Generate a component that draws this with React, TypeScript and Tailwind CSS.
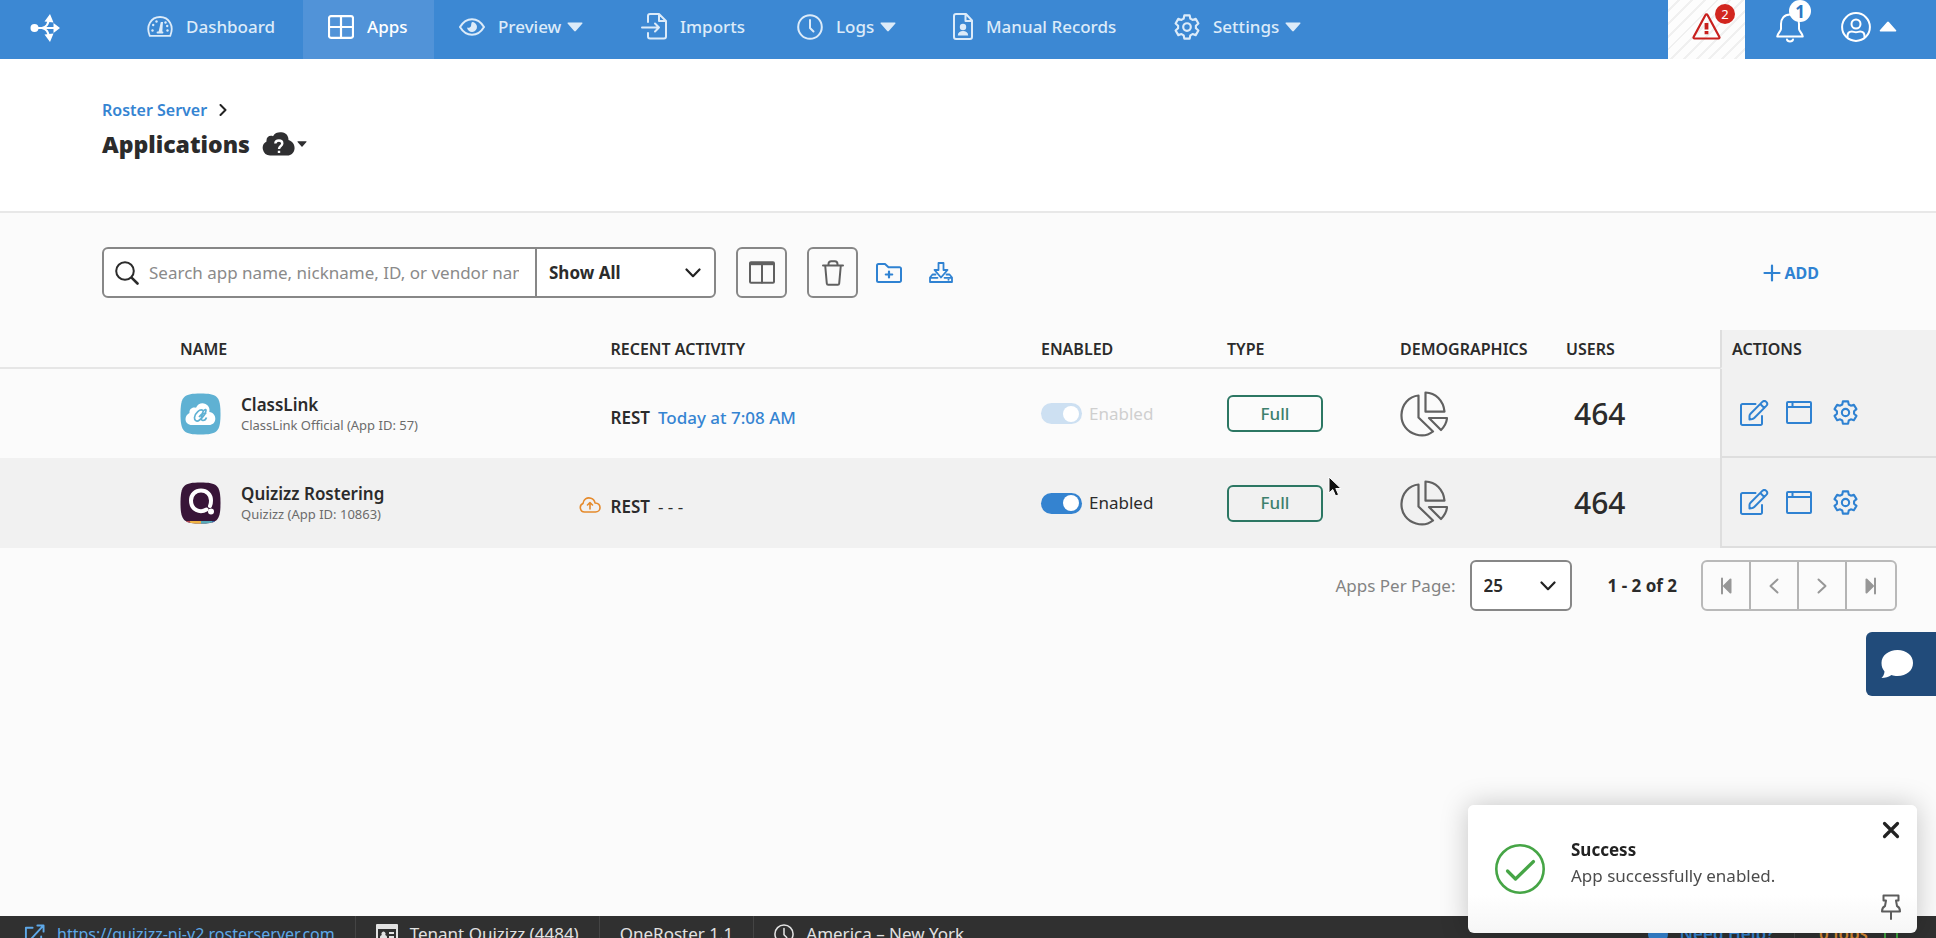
import React, { useState } from "react";

type IconProps = { className?: string };

const stroke = {
  fill: "none",
  stroke: "currentColor",
  strokeWidth: 2,
  strokeLinecap: "round" as const,
  strokeLinejoin: "round" as const,
};

const LogoIcon = ({ className }: IconProps) => (
  <svg viewBox="0 0 30 28" className={className} aria-hidden="true">
    <g fill="none" stroke="currentColor" strokeWidth="2.2">
      <path d="M4 14H25M12 14C17 13 18 10 19 5M12 14C17 15 18 18 19 23" />
    </g>
    <circle cx="4.5" cy="14" r="4" fill="currentColor" />
    <path d="M23.500 9 30 14l-6.500 5zM14.500 7.500 20 0l3.500 8.500zM14.500 20.500l5.500 7.500 3.500-8.500z" fill="currentColor" />
  </svg>
);

const GaugeIcon = ({ className }: IconProps) => (
  <svg viewBox="0 0 26 21" className={className} aria-hidden="true">
    <path {...stroke} strokeWidth="1.8" d="M2.800 19.800C-1.500 10 4 1 13 1s14.500 9 10.200 18.800z" />
    <path {...stroke} strokeWidth="1.8" d="M10.500 16.500h5" />
    <g fill="currentColor">
      <circle cx="9.5" cy="5.500" r="1.200" />
      <circle cx="6.200" cy="9" r="1.200" />
      <circle cx="5.500" cy="14.500" r="1.200" />
      <circle cx="18.500" cy="6.500" r="1.200" />
      <circle cx="20.200" cy="10" r="1.200" />
      <circle cx="20.500" cy="14.500" r="1.200" />
      <path d="M11.300 17l2.500-11h2.200l-.8 11z" />
    </g>
  </svg>
);

const GridIcon = ({ className }: IconProps) => (
  <svg viewBox="0 0 26 24" className={className} aria-hidden="true">
    <path {...stroke} strokeWidth="2.2" d="M3 1.200h20a2 2 0 0 1 2 2v17.600a2 2 0 0 1-2 2H3a2 2 0 0 1-2-2V3.200a2 2 0 0 1 2-2zM13 1.200v21.600M1 12h24" />
  </svg>
);

const EyeIcon = ({ className }: IconProps) => (
  <svg viewBox="0 0 26 18" className={className} aria-hidden="true">
    <path {...stroke} d="M1 9C4 4 8 1.200 13 1.200S22 4 25 9c-3 5-7 7.800-12 7.800S4 14 1 9z" />
    <path fill="currentColor" d="M13 4a5 5 0 1 1-5 5.500c1.500.8 3.500.2 4-1.500.4-1.400 0-2.800 1-4z" />
  </svg>
);

const ImportIcon = ({ className }: IconProps) => (
  <svg viewBox="0 0 26 27" className={className} aria-hidden="true">
    <path {...stroke} d="M7 9V3a2 2 0 0 1 2-2h9l7 7v15.500a2 2 0 0 1-2 2H9a2 2 0 0 1-2-2V20M18 1v7h7M1 14.500h17M14 10.500l4 4-4 4" />
  </svg>
);

const ClockIcon = ({ className }: IconProps) => (
  <svg viewBox="0 0 26 26" className={className} aria-hidden="true">
    <circle {...stroke} cx="13" cy="13" r="11.800" />
    <path {...stroke} d="M13 6v8l3.500 3.500" />
  </svg>
);

const RecordIcon = ({ className }: IconProps) => (
  <svg viewBox="0 0 20 27" className={className} aria-hidden="true">
    <path {...stroke} d="M3 1h10l6 6.500v16.500a2 2 0 0 1-2 2H3a2 2 0 0 1-2-2V3a2 2 0 0 1 2-2zM12.500 1v7H19" />
    <circle cx="10" cy="14" r="3.200" fill="currentColor" />
    <path d="M4.800 22.500c0-3 2.200-4.500 5.200-4.500s5.200 1.500 5.200 4.500z" fill="currentColor" />
  </svg>
);

// Outline of a cog with six teeth, centred in a 24-unit box.
const gearPath =
  [0, 60, 120, 180, 240, 300]
    .flatMap((tooth) =>
      [
        [-22, 8.3],
        [-13, 11],
        [13, 11],
        [22, 8.3],
      ].map(([offset, radius]) => {
        const angle = ((tooth + offset) * Math.PI) / 180;
        return `${(12 + radius * Math.sin(angle)).toFixed(2)} ${(12 - radius * Math.cos(angle)).toFixed(2)}`;
      }),
    )
    .map((point, i) => (i ? "L" : "M") + point)
    .join("") + "Z";

const GearIcon = ({ className }: IconProps) => (
  <svg viewBox="0 0 24 24" className={className} aria-hidden="true">
    <path {...stroke} d={gearPath} />
    <circle {...stroke} cx="12" cy="12" r="3.500" />
  </svg>
);

const CaretIcon = ({ className }: IconProps) => (
  <svg viewBox="0 0 16 10" className={className} aria-hidden="true">
    <path d="M1 .5h14q1 .3.400 1.100L8.800 9q-.8.900-1.600 0L.600 1.600Q0 .8 1 .5z" fill="currentColor" />
  </svg>
);

const ChevronDown = ({ className }: IconProps) => (
  <svg viewBox="0 0 16 10" className={className} aria-hidden="true">
    <path {...stroke} strokeWidth="2.2" d="M1.500 1.500 8 8.200l6.500-6.700" />
  </svg>
);

const navItems = [
  { label: "Dashboard", icon: GaugeIcon, size: "w-[26px] h-[21px]", box: "w-[181px]", caret: false },
  { label: "Apps", icon: GridIcon, size: "w-[26px] h-6", box: "w-[131px]", caret: false, active: true },
  { label: "Preview", icon: EyeIcon, size: "w-[26px] h-[18px]", box: "w-[182px]", caret: true },
  { label: "Imports", icon: ImportIcon, size: "w-[26px] h-[27px]", box: "w-[156px]", caret: false },
  { label: "Logs", icon: ClockIcon, size: "w-[26px] h-[26px]", box: "w-[156px]", caret: true },
  { label: "Manual Records", icon: RecordIcon, size: "w-5 h-[27px]", box: "w-[221px]", caret: false },
  { label: "Settings", icon: GearIcon, size: "w-[26px] h-[26px]", box: "w-[180px]", caret: true },
];

function TopNav() {
  return (
    <header className="flex h-[59px] shrink-0 items-stretch bg-[#3c88d3] text-white">
      <a href="#home" aria-label="Home" className="flex w-[122px] items-center pb-1 pl-[30px]">
        <LogoIcon className="h-7 w-[30px]" />
      </a>
      <nav className="flex">
        {navItems.map(({ label, icon: Icon, size, box, caret, active }) => (
          <a
            key={label}
            href={"#" + label}
            className={
              "flex items-center whitespace-nowrap pb-1.5 pl-[25px] text-[17px] font-medium leading-6 " +
              box +
              (active ? " bg-[#5193d8] text-white" : " text-[#dcebf9]")
            }
          >
            <Icon className={"mr-[13px] shrink-0 " + size} />
            {label}
            {caret && <CaretIcon className="ml-1.5 h-2.5 w-4" />}
          </a>
        ))}
      </nav>
      <div className="ml-auto flex">
        <button
          aria-label="Alerts"
          className="relative flex w-[77px] items-center justify-center bg-[repeating-linear-gradient(135deg,#fdfdfd_0,#fdfdfd_7px,#f0f0f0_7px,#f0f0f0_9px)] pb-1.5 text-[#c8201e]"
        >
          <svg viewBox="0 0 29 27" className="h-[27px] w-[29px]" aria-hidden="true">
            <path {...stroke} strokeWidth="2.2" d="M13.600 1.800a1 1 0 0 1 1.800 0l12 22.200a1 1 0 0 1-.9 1.500h-24a1 1 0 0 1-.9-1.500z" />
            <path d="M12.600 10h3.800v6.500h-3.800zM12.600 18h3.800v3.200h-3.800z" fill="currentColor" />
          </svg>
          <span className="absolute left-[47px] top-1 flex size-5 items-center justify-center rounded-full bg-[#d2261f] text-[13px] leading-none text-white">
            2
          </span>
        </button>
        <button aria-label="Notifications" className="relative flex w-[90px] items-center justify-center pb-1">
          <svg viewBox="0 0 28 30" className="h-[30px] w-7" aria-hidden="true">
            <path {...stroke} d="M14 1.500C8 1.500 5 6 5 11v5c0 2-3.500 4.500-3.800 7.500h25.600C26.500 20.500 23 18 23 16v-5c0-5-3-9.500-9-9.500zM11 26.500c.5 2.500 5.500 2.500 6 0" />
          </svg>
          <span className="absolute left-11 top-0 flex size-[22px] items-center justify-center rounded-full bg-white text-[17px] font-bold leading-none text-[#2c77c3]">
            1
          </span>
        </button>
        <button aria-label="Account" className="flex w-[101px] items-center gap-2 pb-1.5 pl-1.5">
          <svg viewBox="0 0 30 30" className="size-[30px]" aria-hidden="true">
            <g {...stroke}>
              <circle cx="15" cy="15" r="13.900" />
              <circle cx="15" cy="12" r="4.500" />
              <path d="M6.500 25c-.3-4 1.500-5.500 4.300-5.500 1.500 0 2.500.8 4.200.8s2.700-.8 4.200-.8c2.800 0 4.600 1.500 4.300 5.500" />
            </g>
          </svg>
          <CaretIcon className="h-[11px] w-[18px] rotate-180" />
        </button>
      </div>
    </header>
  );
}

function PageHeader() {
  return (
    <section className="h-[154px] shrink-0 border-b-2 border-[#e8e8e8] bg-white pl-[102px] pt-[39px]">
      <div className="flex items-center gap-3 leading-6">
        <a href="#roster" className="text-[16px] font-semibold text-[#3584d2]">
          Roster Server
        </a>
        <svg viewBox="0 0 8 12" className="h-3 w-2 text-[#222]" aria-hidden="true">
          <path {...stroke} d="M1.500 1 6.500 6l-5 5" />
        </svg>
      </div>
      <div className="mt-1.5 flex items-center leading-8">
        <h1 className="font-['Open_Sans','Noto_Sans',sans-serif] text-[23px] font-extrabold text-[#2b2b2b]">Applications</h1>
        <button aria-label="Help" className="ml-3 flex items-center gap-0.5 text-[#2f2f31]">
          <svg viewBox="0 0 33 24" className="h-6 w-[33px]" aria-hidden="true">
            <path d="M8 23.500a7.500 7.500 0 0 1-3.500-14C4 5 7.500 3 11 4.200 13 .8 16 0 19.500.300 24 .8 26.500 3.500 26.500 8c4 1.500 6.500 4.500 6 9-.5 4-3.500 6.500-7 6.500z" fill="currentColor" />
            <path fill="none" stroke="#fff" strokeWidth="2.4" d="M13.300 11.500c.3-4 7-4 7 0 0 2.500-3.300 2.500-3.300 5.500M17 18.700v2.300" />
          </svg>
          <CaretIcon className="h-1.5 w-2.5" />
        </button>
      </div>
    </section>
  );
}

function Toolbar() {
  return (
    <div className="flex items-center pb-8 pl-[102px] pr-[117px] pt-[34px]">
      <div className="flex h-[51px] w-[614px] rounded-md border-2 border-[#878787] bg-white">
        <label className="flex min-w-0 flex-1 items-center border-r-2 border-[#878787] pl-[11px] pr-4">
          <svg viewBox="0 0 24 24" className="mr-2.5 size-6 shrink-0 text-[#2b2b2b]" aria-hidden="true">
            <circle {...stroke} cx="10" cy="10" r="8.800" />
            <path {...stroke} strokeWidth="2.6" d="m16.800 16.800 5.700 5.700" />
          </svg>
          <span className="sr-only">Search</span>
          <input
            type="text"
            placeholder="Search app name, nickname, ID, or vendor name"
            className="w-full min-w-0 bg-transparent text-[17px] text-[#2b2b2b] outline-none placeholder:text-[#8a8a8a]"
          />
        </label>
        <label className="relative flex w-[177px] items-center">
          <span className="sr-only">Filter</span>
          <select className="h-full w-full appearance-none bg-transparent pl-3 text-[17px] font-bold text-[#2b2b2b] outline-none">
            <option>Show All</option>
          </select>
          <ChevronDown className="pointer-events-none absolute right-[13px] h-2.5 w-4 text-[#222]" />
        </label>
      </div>
      <button aria-label="Columns" className="ml-5 flex h-[51px] w-[51px] items-center justify-center rounded-md border-2 border-[#878787] text-[#606060]">
        <svg viewBox="0 0 26 23" className="h-[23px] w-[26px]" aria-hidden="true">
          <path {...stroke} d="M2 1.200h22a1 1 0 0 1 1 1v18.600a1 1 0 0 1-1 1H2a1 1 0 0 1-1-1V2.200a1 1 0 0 1 1-1zM13 2v20" />
          <path d="M1 1h24v3.200H1z" fill="currentColor" />
        </svg>
      </button>
      <button aria-label="Delete" className="ml-5 flex h-[51px] w-[51px] items-center justify-center rounded-md border-2 border-[#878787] text-[#606060]">
        <svg viewBox="0 0 22 26" className="h-[26px] w-[22px]" aria-hidden="true">
          <path {...stroke} d="M1 5.500h20M6.500 5V4c0-1.700 1-2.800 2.700-2.800h3.600c1.700 0 2.700 1.100 2.700 2.800v1M3.200 5.500l1.600 18c.1.900.6 1.300 1.400 1.300h9.600c.8 0 1.300-.4 1.400-1.300l1.600-18" />
        </svg>
      </button>
      <button aria-label="New folder" className="ml-[18px] text-[#2f82d2]">
        <svg viewBox="0 0 26 20" className="h-5 w-[26px]" aria-hidden="true">
          <path {...stroke} d="M2.500 1H9l3.500 3.200h11A1.500 1.500 0 0 1 25 5.700v11.800a1.500 1.500 0 0 1-1.500 1.500h-21A1.500 1.500 0 0 1 1 17.500v-15A1.500 1.500 0 0 1 2.500 1z" />
          <path {...stroke} strokeWidth="2.2" d="M13 8.500v6M9.800 11.500h6.400" />
        </svg>
      </button>
      <button aria-label="Download" className="ml-[27px] text-[#2f82d2]">
        <svg viewBox="0 0 24 21" className="h-[21px] w-6" aria-hidden="true">
          <path {...stroke} strokeWidth="1.8" d="M9.500 1h5v7h4L12 15.500 5.500 8h4zM6.500 12.500H3.500L1 15.500V20h22v-4.500l-2.500-3h-3M1 15.800h7.500M15.500 15.800H23" />
          <circle cx="19.500" cy="17.800" r="1" fill="currentColor" />
        </svg>
      </button>
      <button className="ml-auto flex items-center gap-1 text-[16px] font-bold leading-6 text-[#2f82d2]">
        <svg viewBox="0 0 18 18" className="size-[18px]" aria-hidden="true">
          <path {...stroke} strokeWidth="2.2" d="M9 1.500v15M1.500 9h15" />
        </svg>
        ADD
      </button>
    </div>
  );
}

const PieIcon = () => (
  <svg viewBox="0 0 48 46" className="h-[46px] w-12 text-[#616161]" aria-hidden="true">
    <g {...stroke} strokeWidth="2.2">
      <path d="M18.500 4.500v22L33 40.500C28 44.500 22 45.300 16 43.500 7 41 1 33 1.500 23.500 2 13 9 5.500 18.500 4.500z" />
      <path d="M25.500 1.500c10 .3 18 8 19 19.200h-19z" />
      <path d="M29 27h18c-.3 4.500-2.500 8.500-6 12z" />
    </g>
  </svg>
);

const ClassLinkLogo = () => (
  <svg viewBox="0 0 41 42" className="h-[42px] w-[41px] shrink-0" aria-hidden="true">
    <path d="M20.500.500C37 .5 40.500 3 40.500 21S37 41.500 20.500 41.500.500 39 .5 21 4 .5 20.500.500z" fill="#5fb1d3" />
    <path d="M12 32c-4 0-6.500-2.500-6.500-6 0-3 2-5 4-6-.5-4 3-6.500 6.500-5.200C18 10.500 22 9.500 25.500 11c3.500 1.500 4.500 5 3.800 8 4 .5 6.200 3.500 6 7-.2 3.800-2.800 6-6.300 6z" fill="#fff" />
    <g fill="none" stroke="#5fb1d3" strokeWidth="1.7">
      <path d="M23 17.500c-3-2-8 2.500-8.500 7-.3 3.500 2.500 4.500 5 2.500 3.500-2.500 6.500-7 6.500-9.500 0-2-2.500-.5-3.500 2.500-1.200 3.500-2 7.500.5 7.500 1.500 0 3-1.500 3.500-3" />
      <path d="M19 24c3-3.500 6-4.500 7-3" />
    </g>
  </svg>
);

const QuizizzLogo = () => (
  <svg viewBox="0 0 41 42" className="h-[42px] w-[41px] shrink-0" aria-hidden="true">
    <defs>
      <clipPath id="quizizz-tile">
        <path d="M20.500.500C37 .5 40.500 3 40.500 21S37 41.500 20.500 41.500.500 39 .5 21 4 .5 20.500.500z" />
      </clipPath>
    </defs>
    <g clipPath="url(#quizizz-tile)">
      <path fill="#381538" d="M0 0h41v42H0z" />
      <path fill="#b5474f" d="M0 39h10v3H0z" />
      <path fill="#efb243" d="M10 39h11v3H10z" />
      <path fill="#55a9b8" d="M21 39h11v3H21z" />
      <path fill="#3a67a8" d="M32 39h9v3h-9z" />
    </g>
    <path d="M26.500 27.500C20 31.500 11 28 11 18.500 11 12.500 15.500 8.500 21 8.500s10 4 10 10c0 2.500-.3 4-1 5.500" fill="none" stroke="#fff" strokeWidth="4" strokeLinecap="round" />
    <circle cx="31" cy="29.500" r="3" fill="#fff" />
  </svg>
);

const apps = [
  { name: "ClassLink", detail: "ClassLink Official (App ID: 57)", logo: ClassLinkLogo, activity: "Today at 7:08 AM", locked: true, users: 464 },
  { name: "Quizizz Rostering", detail: "Quizizz (App ID: 10863)", logo: QuizizzLogo, activity: "", locked: false, users: 464 },
];

function AppsTable() {
  const [enabled, setEnabled] = useState([true, true]);
  return (
    <table className="w-full table-fixed border-separate border-spacing-0 text-left text-[#2b2b2b]">
      <colgroup>
        <col className="w-[180px]" />
        <col />
        <col />
        <col className="w-[186px]" />
        <col className="w-[173px]" />
        <col className="w-[166px]" />
        <col className="w-[154px]" />
        <col className="w-[216px]" />
      </colgroup>
      <thead>
        <tr className="h-[39px] text-[16px] leading-6">
          <td className="border-b-2 border-[#e6e6e6]" />
          {["NAME", "RECENT ACTIVITY", "ENABLED", "TYPE", "DEMOGRAPHICS", "USERS"].map((h) => (
            <th key={h} scope="col" className="border-b-2 border-[#e6e6e6] p-0 font-semibold">
              {h}
            </th>
          ))}
          <th scope="col" className="border-b-2 border-l-2 border-b-[#f1f1f1] border-l-[#dedede] bg-[#f1f1f1] p-0 pl-2.5 font-semibold">
            ACTIONS
          </th>
        </tr>
      </thead>
      <tbody>
        {apps.map((app, i) => (
          <tr key={app.name} className={i % 2 ? "h-[90px] bg-[#f1f1f1]" : "h-[89px]"}>
            <td />
            <td className="p-0">
              <div className="flex items-center gap-5">
                <app.logo />
                <div>
                  <div className="text-[17px] font-semibold leading-[22px]">{app.name}</div>
                  <div className="text-[13px] leading-[18px] text-[#6b6b6b]">{app.detail}</div>
                </div>
              </div>
            </td>
            <td className="p-0">
              <div className="relative flex items-center pt-2 text-[17px] leading-6">
                {!app.activity && (
                  <svg viewBox="0 0 22 16" className="absolute -left-8 top-2.5 h-4 w-[22px] text-[#e58a2b]" aria-label="Pending upload">
                    <path {...stroke} strokeWidth="1.6" d="M5.500 15A4.500 4.500 0 0 1 4 6.400C4.200 2.500 8 0 11.800 1.200c2.400.7 3.900 2.500 4.200 4.800 3 .2 5 2 5 4.600 0 2.500-2 4.400-4.500 4.400zM11 12V5.500M8.500 8 11 5.500 13.500 8" />
                  </svg>
                )}
                <span className="font-semibold">REST</span>
                {app.activity ? (
                  <a href="#activity" className="ml-2 font-medium text-[#3584d2]">
                    {app.activity}
                  </a>
                ) : (
                  <span className="ml-2">- - -</span>
                )}
              </div>
            </td>
            <td className="p-0">
              <label className={"flex items-center gap-[7px] text-[17px] leading-6 " + (app.locked ? "text-[#cfcfcf]" : "text-[#2b2b2b]")}>
                <input
                  type="checkbox"
                  checked={enabled[i]}
                  disabled={app.locked}
                  onChange={() => setEnabled((e) => e.map((v, j) => (j === i ? !v : v)))}
                  className="flex h-[21px] w-[41px] appearance-none items-center rounded-full bg-[#bbb] px-[3px] before:size-4 before:rounded-full before:bg-white checked:justify-end checked:bg-[#3483d0] disabled:checked:bg-[#cde0f2]"
                />
                Enabled
              </label>
            </td>
            <td className="p-0">
              <button className="block h-[37px] w-24 rounded-md border-2 border-[#2c7763] bg-transparent text-[17px] font-medium leading-6 text-[#3d806d]">
                Full
              </button>
            </td>
            <td className="p-0 align-middle">
              <button aria-label="Demographics" className="block">
                <PieIcon />
              </button>
            </td>
            <td className="p-0 pl-2 text-[30px] font-medium leading-9">{app.users}</td>
            <td className="border-b-2 border-l-2 border-[#dedede] bg-[#f1f1f1] p-0 pl-[18px]">
              <div className="flex items-center text-[#2f82d2]">
                <button aria-label="Edit">
                  <svg viewBox="0 0 29 26" className="h-[26px] w-[29px]" aria-hidden="true">
                    <path
                      {...stroke}
                      d="M15.500 4H2.500A1.500 1.500 0 0 0 1 5.500v18A1.500 1.500 0 0 0 2.500 25h18a1.500 1.500 0 0 0 1.500-1.500V16M9.500 19.500V16q0-1.300 1-2.300L22.300 1.900a2.800 2.800 0 0 1 4 4L14.500 17.700q-1 1-2.300 1.300zM20.300 4l4 4"
                    />
                  </svg>
                </button>
                <button aria-label="Open window" className="ml-[17px]">
                  <svg viewBox="0 0 26 23" className="h-[23px] w-[26px]" aria-hidden="true">
                    <path {...stroke} d="M2 1h22a1 1 0 0 1 1 1v19a1 1 0 0 1-1 1H2a1 1 0 0 1-1-1V2a1 1 0 0 1 1-1zM1 6h24M6.500 1v5" />
                  </svg>
                </button>
                <button aria-label="App settings" className="ml-[21px]">
                  <GearIcon className="size-[25px]" />
                </button>
              </div>
            </td>
          </tr>
        ))}
      </tbody>
    </table>
  );
}

const pagerIcons = [
  { label: "First page", path: "M4 2.500v15M12.500 3.500v13L6 10z", fill: true },
  { label: "Previous page", path: "M11.500 3.500 4.500 10l7 6.500", fill: false },
  { label: "Next page", path: "M4.500 3.500l7 6.500-7 6.500", fill: false },
  { label: "Last page", path: "M12 2.500v15M3.500 3.500v13L10 10z", fill: true },
];

function Pagination() {
  return (
    <div className="flex items-center justify-end pr-[39px] pt-3 text-[17px] leading-6">
      <label className="flex items-center gap-3.5 text-[#838383]">
        Apps Per Page:
        <span className="relative flex h-[51px] w-[102px] items-center rounded-md border-2 border-[#878787] bg-white">
          <select className="h-full w-full appearance-none bg-transparent pl-3 font-semibold text-[#2b2b2b] outline-none">
            <option>25</option>
          </select>
          <ChevronDown className="pointer-events-none absolute right-3.5 h-2.5 w-4 text-[#222]" />
        </span>
      </label>
      <span className="ml-9 mr-6 font-bold text-[#2b2b2b]">1 - 2 of 2</span>
      <div className="flex h-[51px] divide-x-2 divide-[#b4b4b4] rounded-md border-2 border-[#b9b9b9] text-[#979797]">
        {pagerIcons.map(({ label, path, fill }) => (
          <button key={label} aria-label={label} disabled className="flex w-12 items-center justify-center">
            <svg viewBox="0 0 16 20" className="h-5 w-4" aria-hidden="true">
              <path {...stroke} fill={fill ? "currentColor" : "none"} d={path} />
            </svg>
          </button>
        ))}
      </div>
    </div>
  );
}

function StatusBar() {
  return (
    <footer className="flex h-[22px] shrink-0 items-start overflow-hidden bg-[#303030] text-[17px] leading-9 text-[#e2e2e2]">
      <a href="#server" className="flex items-center pl-6 pr-5 text-[16px] text-[#5ea8e8]">
        <svg viewBox="0 0 22 22" className="mr-3 size-[21px]" aria-hidden="true">
          <path {...stroke} d="M9 4H2v17h16v-8M8 15 20 2M14 1.500h6.500V8" />
        </svg>
        <span className="leading-9 underline">https://quizizz-ni-v2.rosterserver.com</span>
      </a>
      <span className="flex items-center border-l border-[#444] px-5">
        <svg viewBox="0 0 22 20" className="mr-3 h-5 w-[22px]" aria-hidden="true">
          <path {...stroke} d="M1 1h20v18H1z" />
          <path d="M1 1h20v4H1zM4 14.500h7V13c0-1-1-2-2-2a2 2 0 1 0-3 0c-1 0-2 1-2 2zM13 8h5v2h-5zM13 12h5v2h-5z" fill="currentColor" />
        </svg>
        Tenant Quizizz (4484)
      </span>
      <span className="border-l border-[#444] px-5">OneRoster 1.1</span>
      <span className="flex items-center border-l border-[#444] px-5">
        <ClockIcon className="mr-3 size-5" />
        America – New York
      </span>
      <span className="ml-auto flex items-center pr-5 font-semibold text-[#3584d2]">
        <span className="mr-3 size-5 rounded-full bg-[#3584d2]" />
        Need Help?
      </span>
      <span className="flex items-center border-l border-[#444] pl-6 pr-[38px] font-semibold text-[#d98a34]">
        0 Jobs
        <span className="ml-4 h-5 w-3.5 rounded border-2 border-[#3fa33f]" />
      </span>
    </footer>
  );
}

function Toast({ onClose }: { onClose: () => void }) {
  return (
    <div role="status" className="fixed bottom-[5px] right-[19px] flex h-32 w-[449px] items-center rounded-md bg-gradient-to-b from-white from-70% to-[#f6f6f6] pl-[27px] shadow-[0_0_28px_rgba(0,0,0,0.22)]">
      <svg viewBox="0 0 50 50" className="size-[50px] text-[#46a546]" aria-hidden="true">
        <circle {...stroke} cx="25" cy="25" r="23.700" strokeWidth="2.6" />
        <path {...stroke} strokeWidth="3.2" d="m12.500 27 8 8 18-17.500" />
      </svg>
      <div className="ml-[26px] pb-3 text-[17px] leading-[26px]">
        <div className="font-bold text-[#222]">Success</div>
        <div className="text-[#4c4c4c]">App successfully enabled.</div>
      </div>
      <div className="ml-auto flex h-full w-[52px] flex-col items-center justify-between py-[13px]">
        <button aria-label="Close" onClick={onClose} className="flex size-6 items-center justify-center text-[#222]">
          <svg viewBox="0 0 18 18" className="size-[18px]" aria-hidden="true">
            <path {...stroke} strokeWidth="3.2" d="m2.500 2.500 13 13m0-13-13 13" />
          </svg>
        </button>
        <button aria-label="Pin" className="text-[#5c5c5c]">
          <svg viewBox="0 0 20 26" className="h-[26px] w-5" aria-hidden="true">
            <path {...stroke} d="M2.500 1.500h15v5H15L16 12c2 1 3 3 3 5.500H1C1 15 2 13 4 12l1-5.500H2.500zM10 17.500V25" />
          </svg>
        </button>
      </div>
    </div>
  );
}

export default function App() {
  const [toast, setToast] = useState(true);
  return (
    <div className="flex h-screen flex-col overflow-hidden bg-[#fbfbfb] font-['Noto_Sans','Open_Sans',sans-serif] text-[#2b2b2b]">
      <TopNav />
      <PageHeader />
      <main className="min-h-0 flex-1">
        <Toolbar />
        <AppsTable />
        <Pagination />
      </main>
      <StatusBar />
      <button aria-label="Open chat" className="fixed right-0 top-[632px] flex h-16 w-[70px] items-center rounded-l-md bg-[#214b7a] pl-[15px] text-white">
        <svg viewBox="0 0 32 28" className="h-7 w-8" aria-hidden="true">
          <path d="M16.500 0C25.500 0 32 5.500 32 13s-6.500 13-15.500 13c-2.500 0-4-.3-6-1C8 27 4 28 .5 28c1.500-1.500 3-4 3-6.500C1.500 19 .5 16.500.5 13 .5 5.500 7.500 0 16.500 0z" fill="currentColor" />
        </svg>
      </button>
      {toast && <Toast onClose={() => setToast(false)} />}
      <svg viewBox="0 0 14 22" className="pointer-events-none fixed left-[1328px] top-[476px] h-[22px] w-3.5" aria-hidden="true">
        <path d="M1 1v16l3.800-3.500 2.800 6.500 3-1.300-2.800-6.200H13z" fill="#111" stroke="#fff" strokeWidth="1" />
      </svg>
    </div>
  );
}
